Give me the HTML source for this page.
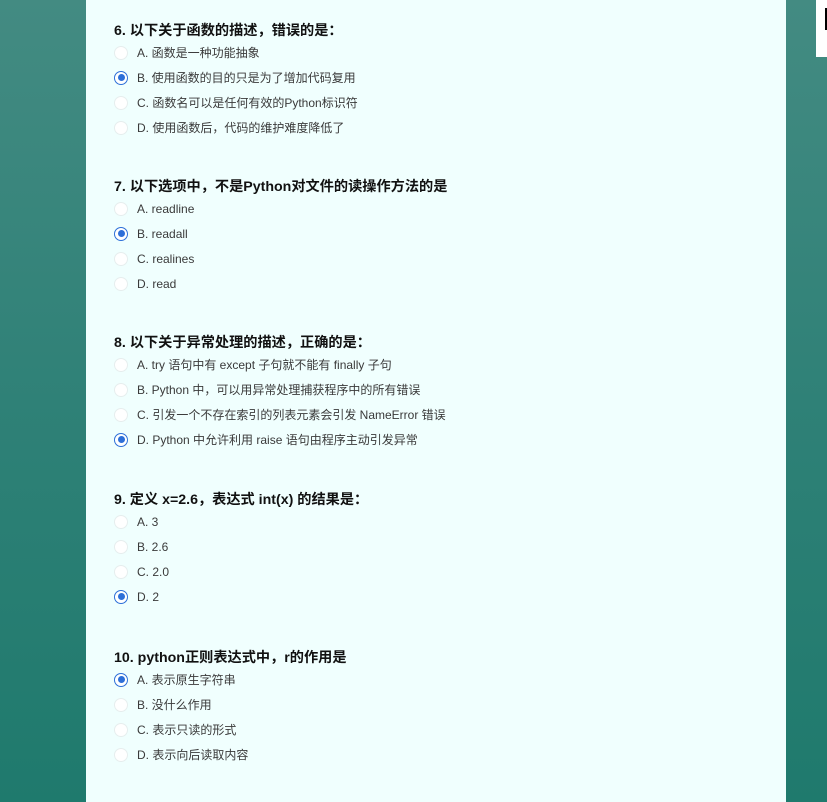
<!DOCTYPE html>
<html><head><meta charset="utf-8"><style>
body{margin:0;width:827px;height:802px;overflow:hidden;background:linear-gradient(180deg,#438b82 0%,#2f8177 50%,#1f7a6d 100%);font-family:"Liberation Sans","Noto Sans CJK SC",sans-serif;position:relative}
.panel{position:absolute;left:86px;top:0;width:700px;height:802px;background:#f0fffe}
.wb{position:absolute;left:816px;top:0;width:11px;height:57px;background:#fff}
.wb i{position:absolute;left:9px;top:8px;width:2px;height:22px;background:#000}
.q{position:absolute;left:114px}
.t{font-size:14.2px;font-weight:bold;color:#111;height:18px;line-height:18px}
.o{height:25px;display:flex;align-items:center;font-size:12px;color:#3a3a3a}
.r{width:14px;height:14px;border-radius:50%;border:1px solid #e6eeee;background:#fff;margin-right:9px;box-sizing:border-box;position:relative;flex:none}
.r.s{border:1px solid #2d6fd8}
.r.s:after{content:"";position:absolute;left:2.5px;top:2.5px;width:7px;height:7px;border-radius:50%;background:#2d6fd8}
</style></head><body>
<div class="panel"></div><div class="wb"><i></i></div>
<div class="q" style="top:22px"><div class="t">6. 以下关于函数的描述，错误的是：</div>
<div class="o"><span class="r"></span>A. 函数是一种功能抽象</div>
<div class="o"><span class="r s"></span>B. 使用函数的目的只是为了增加代码复用</div>
<div class="o"><span class="r"></span>C. 函数名可以是任何有效的Python标识符</div>
<div class="o"><span class="r"></span>D. 使用函数后，代码的维护难度降低了</div></div>
<div class="q" style="top:178px"><div class="t">7. 以下选项中，不是Python对文件的读操作方法的是</div>
<div class="o"><span class="r"></span>A. readline</div>
<div class="o"><span class="r s"></span>B. readall</div>
<div class="o"><span class="r"></span>C. realines</div>
<div class="o"><span class="r"></span>D. read</div></div>
<div class="q" style="top:334px"><div class="t">8. 以下关于异常处理的描述，正确的是：</div>
<div class="o"><span class="r"></span>A. try 语句中有 except 子句就不能有 finally 子句</div>
<div class="o"><span class="r"></span>B. Python 中，可以用异常处理捕获程序中的所有错误</div>
<div class="o"><span class="r"></span>C. 引发一个不存在索引的列表元素会引发 NameError 错误</div>
<div class="o"><span class="r s"></span>D. Python 中允许利用 raise 语句由程序主动引发异常</div></div>
<div class="q" style="top:491px"><div class="t">9. 定义 x=2.6，表达式 int(x) 的结果是：</div>
<div class="o"><span class="r"></span>A. 3</div>
<div class="o"><span class="r"></span>B. 2.6</div>
<div class="o"><span class="r"></span>C. 2.0</div>
<div class="o"><span class="r s"></span>D. 2</div></div>
<div class="q" style="top:649px"><div class="t">10. python正则表达式中，r的作用是</div>
<div class="o"><span class="r s"></span>A. 表示原生字符串</div>
<div class="o"><span class="r"></span>B. 没什么作用</div>
<div class="o"><span class="r"></span>C. 表示只读的形式</div>
<div class="o"><span class="r"></span>D. 表示向后读取内容</div></div>
</body></html>
